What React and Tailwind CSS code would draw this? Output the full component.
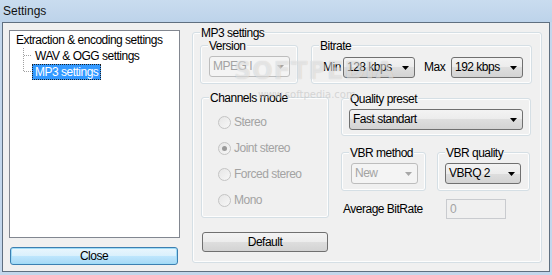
import React from 'react';

const Arrow = ({ disabled }) => (
  <svg width="7" height="4" viewBox="0 0 7 4" className="shrink-0">
    <polygon points="0,0 7,0 3.5,4" fill={disabled ? '#a7a7a7' : '#000'} />
  </svg>
);

function Combo({ text, w, disabled }) {
  return (
    <div
      className={`flex h-[21px] items-center justify-between rounded-[3px] border pl-[3px] pr-[5px] ${
        disabled
          ? 'border-[#bdbdbd] bg-[#f4f4f4] text-[#a3a3a3]'
          : 'border-[#707070] bg-[linear-gradient(to_bottom,#f3f3f3_0%,#ececec_50%,#dedede_50%,#d3d3d3_100%)] text-black'
      }`}
      style={{ width: w }}
    >
      <span className="leading-[19px] whitespace-nowrap">{text}</span>
      <Arrow disabled={disabled} />
    </div>
  );
}

function Group({ title, className = '', children }) {
  return (
    <div className={`relative rounded-[3px] border border-[#d5dfe5] shadow-[inset_0_0_0_1px_#fdfdfd] ${className}`}>
      <span className="absolute -top-[7px] left-[7px] bg-[#f0f0f0] px-[1px] leading-[14px] whitespace-nowrap">
        {title}
      </span>
      {children}
    </div>
  );
}

function Radio({ label, checked }) {
  return (
    <div className="flex h-[26px] items-center text-[#a3a3a3]">
      <span className="flex h-[13px] w-[13px] items-center justify-center rounded-full border border-[#c4c4c4] bg-[linear-gradient(to_bottom_right,#e6e6e6,#f7f7f7)]">
        {checked && <span className="h-[5px] w-[5px] rounded-full bg-[#9a9a9a]" />}
      </span>
      <span className="ml-[3px] leading-[14px]">{label}</span>
    </div>
  );
}

const Connector = ({ last }) => (
  <svg width="9" height="16" className="shrink-0" shapeRendering="crispEdges">
    <line x1="0.5" y1="0" x2="0.5" y2={last ? 8 : 16} stroke="#a0a0a0" strokeDasharray="1 1" />
    <line x1="1" y1="7.5" x2="9" y2="7.5" stroke="#a0a0a0" strokeDasharray="1 1" />
  </svg>
);

export default function App() {
  return (
    <div className="relative h-[275px] w-[552px] overflow-hidden bg-[#c3d7ec] font-['Liberation_Sans',Arial,sans-serif] text-[12px] tracking-[-0.5px] text-black">
      {/* title bar */}
      <div className="flex h-[22px] items-center bg-[linear-gradient(to_bottom,#c9dcef,#bdd3ea)] pl-[3px] text-[12px] tracking-normal text-[#111]">
        Settings
      </div>

      <div className="ml-[2px] flex h-[250px] w-[548px] items-start border border-[#5f6f80] bg-[#f0f0f0]">
        {/* left side: tree and close */}
        <div className="ml-[6px] mt-[7px] flex flex-col">
          <div className="h-[208px] w-[171px] border border-[#828790] bg-white pl-[6px] pt-[1px]">
            <div className="h-[16px] leading-[16px] whitespace-nowrap">Extraction &amp; encoding settings</div>
            <div className="ml-[7px] flex h-[16px] items-center">
              <Connector />
              <span className="px-[3px] leading-[16px] whitespace-nowrap">WAV &amp; OGG settings</span>
            </div>
            <div className="ml-[7px] flex h-[16px] items-center">
              <Connector last />
              <span className="border border-dotted border-[#222] bg-[#3399ff] px-[2px] leading-[14px] whitespace-nowrap text-white">
                MP3 settings
              </span>
            </div>
          </div>
          <button
            type="button"
            className="ml-[1px] mt-[9px] h-[18px] w-[168px] rounded-[3px] border border-[#3c7fb1] bg-[linear-gradient(to_bottom,#eaf6fd_0%,#d9f0fc_50%,#bee6fd_50%,#a7d9f5_100%)] leading-[16px] shadow-[inset_0_0_0_1px_#9fdcf7]"
          >
            Close
          </button>
        </div>

        {/* right side: MP3 settings */}
        <Group title="MP3 settings" className="ml-[12px] mt-[9px] h-[231px] w-[350px]">
          <div className="ml-[7px] mt-[12px] flex">
            <Group title="Version" className="h-[39px] w-[98px] pl-[8px] pt-[10px]">
              <Combo text="MPEG I" w={81} disabled />
            </Group>
            <Group title="Bitrate" className="ml-[13px] flex h-[39px] w-[221px] items-start pl-[11px] pt-[11px]">
              <span className="w-[20px] leading-[21px]">Min</span>
              <Combo text="128 kbps" w={72} />
              <span className="ml-[9px] w-[27px] leading-[21px]">Max</span>
              <Combo text="192 kbps" w={72} />
            </Group>
          </div>

          <div className="mt-[13px] flex items-start">
            <div className="ml-[8px] flex flex-col">
              <Group title="Channels mode" className="h-[121px] w-[128px] pl-[16px] pt-[11px]">
                <Radio label="Stereo" />
                <Radio label="Joint stereo" checked />
                <Radio label="Forced stereo" />
                <Radio label="Mono" />
              </Group>
              <button
                type="button"
                className="ml-[1px] mt-[14px] h-[20px] w-[126px] rounded-[3px] border border-[#707070] bg-[linear-gradient(to_bottom,#f3f3f3_0%,#ececec_50%,#dedede_50%,#d3d3d3_100%)] leading-[18px]"
              >
                Default
              </button>
            </div>

            <div className="ml-[12px] mt-[1px] flex flex-col">
              <Group title="Quality preset" className="h-[38px] w-[190px] pl-[7px] pt-[10px]">
                <Combo text="Fast standart" w={174} />
              </Group>
              <div className="mt-[16px] flex">
                <Group title="VBR method" className="h-[39px] w-[85px] pl-[9px] pt-[10px]">
                  <Combo text="New" w={67} disabled />
                </Group>
                <Group title="VBR quality" className="ml-[11px] h-[39px] w-[93px] pl-[7px] pt-[10px]">
                  <Combo text="VBRQ 2" w={76} />
                </Group>
              </div>
              <div className="ml-[2px] mt-[8px] flex h-[20px] items-center">
                <span className="w-[103px] leading-[20px]">Average BitRate</span>
                <div className="h-[20px] w-[60px] border border-[#c9cbcf] bg-[#f0f0f0] pl-[3px] leading-[18px] text-[#a3a3a3]">
                  0
                </div>
              </div>
            </div>
          </div>
        </Group>
      </div>

      {/* softpedia watermark over the dialog */}
      <div className="pointer-events-none absolute left-[234px] top-[53px] font-['DejaVu_Sans',sans-serif] text-[24px] font-bold tracking-[1px] text-white/50 [text-shadow:0_0_1px_rgba(0,0,0,0.18)]">
        SOFTPEDIA
      </div>
      <div className="pointer-events-none absolute left-[258px] top-[87px] font-['DejaVu_Sans',sans-serif] text-[10px] tracking-normal text-[#c8c8c8]/70">
        www.softpedia.com
      </div>
    </div>
  );
}
